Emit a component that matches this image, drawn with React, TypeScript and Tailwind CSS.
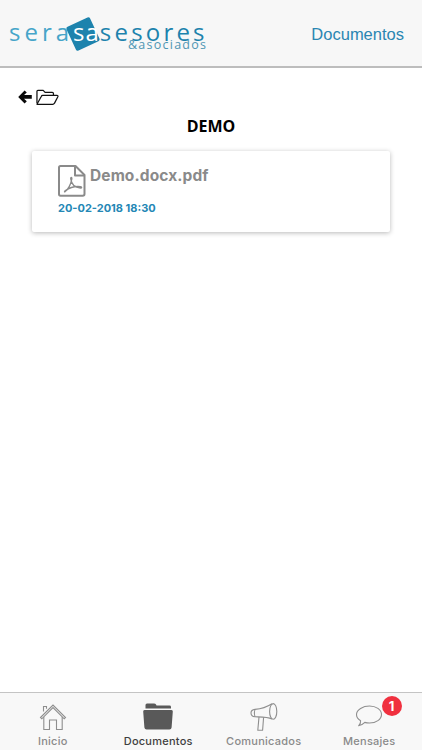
import React from "react";

const Home = () => (
  <svg width="28" height="28" viewBox="0 0 28 28" fill="none" stroke="#8e8e8e" strokeWidth="1.1" strokeLinejoin="miter">
    <path d="M1.5 14.5 L14 2 L26.5 14.5 L25.2 15.8 L14 4.6 L2.8 15.8 Z" />
    <path d="M4.5 8.5 V3.5 H7.5 V5.8" />
    <path d="M4.8 14 V26.5 H10.5 V17 H17.5 V26.5 H23.2 V14" />
  </svg>
);

const Folder = () => (
  <svg width="30" height="27" viewBox="0 0 30 27" fill="#595959">
    <path d="M2.5 2 Q2.5 0.5 4 0.5 H11 Q12.5 0.5 13 1.6 L13.5 2.6 H26.5 Q28 2.6 28 4 V5.6 H2.5 Z" />
    <path d="M1.5 7 H28.5 Q30 7 29.8 8.6 L28.6 24.4 Q28.4 26.5 26.4 26.5 H3.6 Q1.6 26.5 1.4 24.4 L0.2 8.6 Q0 7 1.5 7 Z" />
  </svg>
);

const Megaphone = () => (
  <svg width="28" height="28" viewBox="0 0 28 28" fill="none" stroke="#8e8e8e" strokeWidth="1.1" strokeLinejoin="round">
    <ellipse cx="23.2" cy="8.4" rx="3.6" ry="7.8" />
    <path d="M22 0.8 C17 4 10 6 5 6.4 C2.4 6.6 1 8 1 10 C1 12.4 2.6 13.6 5 13.8 C10 14 17 13.6 22 16" />
    <path d="M9 14 L7.8 27.3 H12.6 L13.6 14.2" />
    <path d="M5 6.6 Q3.6 10 5 13.8" />
  </svg>
);

const Bubble = () => (
  <svg width="28" height="26" viewBox="0 0 28 26" fill="none" stroke="#8e8e8e" strokeWidth="1.1" strokeLinejoin="round">
    <path d="M14.5 2 C21 2 26.5 5.6 26.5 10.5 C26.5 15.4 21 19 14.5 19 C12.8 19 11.2 18.8 9.8 18.4 C8 20.2 5.6 21.6 3.6 21.8 C5 20.4 5.8 18.6 5.6 16.8 C3 15.2 1.5 13 1.5 10.5 C1.5 5.6 8 2 14.5 2 Z" />
  </svg>
);

const Pdf = () => (
  <svg width="28" height="32" viewBox="0 0 28 32" fill="none" stroke="#8a8a8a" strokeWidth="2" strokeLinejoin="round">
    <path d="M2.5 1 H17.5 L26.5 10 V29 Q26.5 30.8 24.7 30.8 H2.5 Q1 30.8 1 29 V2.5 Q1 1 2.5 1 Z" />
    <path d="M17 1.5 V10.5 H26" />
    <path strokeWidth="1.4" d="M7 26.5 C10 25 13 19 13.8 14 C14 12 12.6 12 12.8 14 C13.4 19 17 22.5 22.5 23 C24 23 24 21.8 22.5 21.6 C17 21 11 23 7.5 25.5 C6.2 26.6 6.4 27.4 7 26.5 Z" />
  </svg>
);

const OpenFolder = () => (
  <svg width="23" height="17" viewBox="0 0 24 17" fill="none" stroke="#111" strokeWidth="1.3" strokeLinejoin="round">
    <path d="M1 14.5 V2 Q1 1 2 1 H7.5 L9.5 3.2 H17 Q18.2 3.2 18.2 4.4 V6.4" />
    <path d="M1 15.5 L5.5 7.4 Q5.9 6.4 7 6.4 H21.8 Q23.4 6.4 22.8 7.8 L19.2 14.6 Q18.6 15.8 17.4 15.8 H1.6 Z" />
  </svg>
);

const Arrow = () => (
  <svg width="14" height="14" viewBox="0 0 14 14" fill="#0a0a0a">
    <path d="M6.6 0.4 L8.8 2.6 L6 5 H13.8 V8.8 H6 L8.8 11.2 L6.6 13.4 L0.2 6.9 Z" />
  </svg>
);

const Logo = () => (
  <div className="relative w-[200px] h-[50px] font-['Open_Sans',sans-serif]">
    <div className="absolute left-[61px] top-[13px] w-[26px] h-[26px] rotate-[-25deg] bg-[#1d83ad] rounded-[2px]" />
    <div className="absolute left-0 top-[17px] flex text-[24px] leading-[14px] whitespace-nowrap">
      <span className="text-[#46a5c9] tracking-[4px]">sera</span>
      <span className="text-white tracking-[1px]">sa</span>
      <span className="text-[#1d83ad] tracking-[3.2px]">sesores</span>
    </div>
    <div className="absolute left-[119px] top-[32px] text-[12.5px] leading-[10px] tracking-[1.25px] text-[#4f96b3] whitespace-nowrap">
      &amp;asociados
    </div>
  </div>
);

const Tab = ({ icon, label, active, badge }: { icon: React.ReactNode; label: string; active?: boolean; badge?: string }) => (
  <div className="relative flex-1 flex flex-col items-center">
    <div className="h-[33px] mt-[7px] flex items-center justify-center">{icon}</div>
    <div className={`mt-[1px] text-[11px] leading-[14px] tracking-[0.25px] font-medium ${active ? "text-[#3f3f3f]" : "text-[#8a8a8a]"}`}>{label}</div>
    {badge && (
      <div className="absolute left-[65px] top-[3px] w-[20px] h-[20px] rounded-full bg-[#f0303f] text-white text-[13px] leading-[20px] font-bold text-center">
        {badge}
      </div>
    )}
  </div>
);

export default function App() {
  return (
    <div className="w-[422px] h-[750px] flex flex-col bg-white font-['Inter',sans-serif] overflow-hidden">
      <header className="h-[68px] shrink-0 bg-[#f7f7f7] border-b-2 border-[#bdbdbd] flex items-center justify-between pl-[9px] pr-[18px]">
        <Logo />
        <span className="text-[16.5px] text-[#2a86b2] font-['Liberation_Sans',sans-serif] mt-[2px]">Documentos</span>
      </header>
      <main className="flex-1 min-h-0 flex flex-col">
        <div className="flex items-center gap-[4px] pl-[18px] pt-[21px] h-[37px]">
          <Arrow />
          <OpenFolder />
        </div>
        <h1 className="mt-[11px] text-center text-[16px] leading-[20px] font-bold text-black font-['Open_Sans',sans-serif]">DEMO</h1>
        <div className="ml-[32px] mt-[15px] w-[358px] h-[81px] bg-white rounded-[2px] shadow-[0_1px_5px_rgba(0,0,0,0.28)] pl-[26px] pt-[14px]">
          <div className="flex items-start gap-[4px]">
            <Pdf />
            <span className="text-[15.5px] leading-[20px] font-bold text-[#8a8a8a] tracking-[0.1px] mt-[1px]">Demo.docx.pdf</span>
          </div>
          <div className="mt-[4px] text-[11px] leading-[14px] font-bold text-[#2487b5] tracking-[0px]">20-02-2018 18:30</div>
        </div>
      </main>
      <nav className="h-[58px] shrink-0 bg-[#f8f8f8] border-t border-[#c4c4c4] flex">
        <Tab icon={<Home />} label="Inicio" />
        <Tab icon={<Folder />} label="Documentos" active />
        <Tab icon={<Megaphone />} label="Comunicados" />
        <Tab icon={<Bubble />} label="Mensajes" badge="1" />
      </nav>
    </div>
  );
}
